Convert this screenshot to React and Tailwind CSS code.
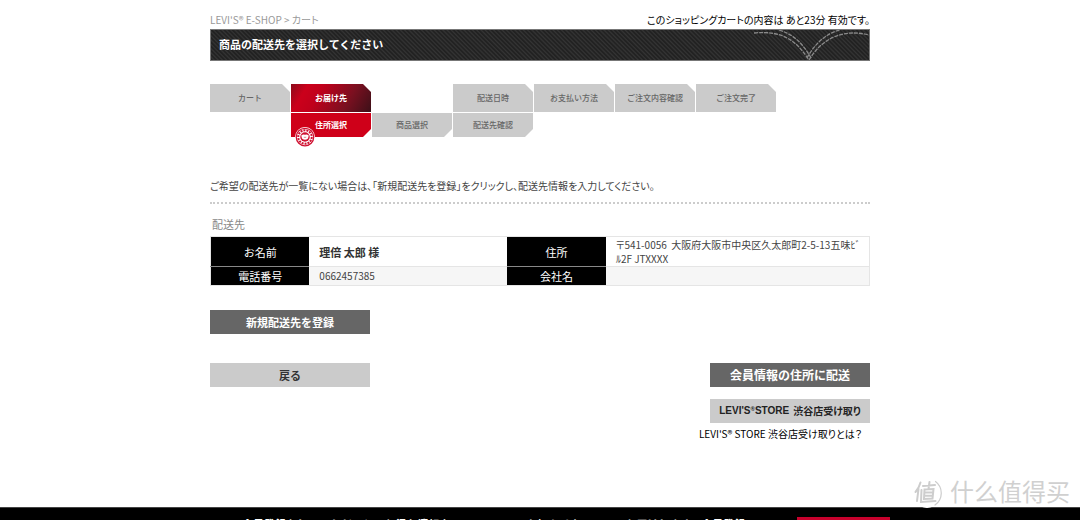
import React from 'react';

const steps = ['カート', 'お届け先', '', '配送日時', 'お支払い方法', 'ご注文内容確認', 'ご注文完了'];
const subSteps = ['', '住所選択', '商品選択', '配送先確認'];

const Step = ({ label, active }) => (
  <li
    aria-current={active ? 'step' : undefined}
    className={`flex h-7 items-center justify-center [clip-path:polygon(0_0,72px_0,100%_8px,100%_100%,0_100%)] ${
      active
        ? 'bg-[linear-gradient(120deg,#8c0a1a_0%,#cb001b_18%,#c0001b_35%,#7a1020_70%,#3c1018_100%)] font-bold text-white'
        : 'bg-[#cbcbcb] font-medium text-[#666]'
    }`}
  >
    {label}
  </li>
);

const SubStep = ({ label, active }) => (
  <li aria-current={active ? 'step' : undefined} className="relative">
    <div
      className={`flex h-6 items-center justify-center [clip-path:polygon(0_0,100%_0,100%_16px,72px_100%,0_100%)] ${
        active ? 'bg-[#cf0019] font-bold text-white' : 'bg-[#cbcbcb] font-medium text-[#666]'
      }`}
    >
      {label}
    </div>
    {active && <Seal />}
  </li>
);

const Seal = () => (
  <svg viewBox="0 0 40 40" className="absolute top-3.5 left-1 h-5 w-5" aria-hidden="true">
    <circle cx="20" cy="20" r="20" fill="#fff" />
    <circle cx="20" cy="20" r="17.5" fill="none" stroke="#cf1030" strokeWidth="2.5" />
    <circle cx="20" cy="20" r="13.5" fill="none" stroke="#cf1030" strokeWidth="4" strokeDasharray="4 2" />
    <circle cx="20" cy="20" r="9.5" fill="#cf1030" />
    <path d="M12.5 17 Q16.5 13.5 20 15.5 Q23.5 13.5 27.5 17 L26 23 Q20 28 14 23 Z" fill="#fff" />
    <path d="M17 19.5 H23 L22 22 H18 Z" fill="#e6a0aa" />
  </svg>
);

const Arcuate = () => (
  <svg viewBox="0 0 120 30" className="h-[30px] w-[120px]" fill="none" stroke="#8a8a8a" strokeWidth="1.3" strokeDasharray="4 1" aria-hidden="true">
    <path d="M5 3 C35 0 48 12 60 30" />
    <path d="M30 0 C46 5 54 14 62 28" />
    <path d="M60 30 C72 10 92 -2 120 5" />
    <path d="M58 28 C66 13 78 3 91 0" />
  </svg>
);

const Watermark = () => (
  <div className="absolute right-2.5 bottom-2.5 flex items-center gap-2 font-['Noto_Sans_CJK_SC',sans-serif] text-[#d0d0d0]">
    <svg viewBox="0 0 30 30" className="h-[30px] w-[30px]" aria-hidden="true">
      <circle cx="15" cy="15" r="15" fill="#fff" />
      <g fill="none" stroke="#cdcdcd" strokeLinecap="round">
        <path d="M23.500 3.500 A14.500 14.500 0 0 1 23 27" strokeWidth="1.200" />
        <g strokeWidth="2">
          <path d="M8.500 4.500 Q7 10 3.500 14 M6.500 11 L5 23" />
          <path d="M11 8 L23 7 M17.500 4 L16.500 11 M12.500 11.500 L21.500 11 L20.500 20.500 L12 21 Z M12.500 14.500 H21 M12.300 17.700 H20.500 M9.500 12 L9 24 L23.500 23" />
        </g>
      </g>
    </svg>
    <span className="pb-1 text-2xl leading-[30px]">什么值得买</span>
  </div>
);

const th = 'w-[15%] border-b bg-black text-[11px] leading-[18px] font-normal text-white';
const td = 'border-b border-[#e5e5e5] pl-2.5';
const actionButton = 'flex h-6 w-40 items-center justify-center';

export default function App() {
  return (
    <div className="relative flex h-screen flex-col overflow-hidden bg-white font-['Noto_Sans_CJK_JP',sans-serif] text-[10px] leading-4 text-[#444]">
      <div className="mx-auto w-full max-w-[660px] grow pt-3">
        <header>
          <div className="flex justify-between [font-feature-settings:'palt']">
            <nav className="text-[#999]" aria-label="breadcrumb">
              <a href="#top">LEVI'S® E-SHOP</a> &gt; カート
            </nav>
            <p className="text-black">このショッピングカートの内容は あと23分 有効です。</p>
          </div>
          <div className="mt-px flex h-8 items-center justify-between border border-[#777] bg-[repeating-linear-gradient(45deg,#222_0px,#222_1px,#343434_2px,#282828_3px)] pl-2">
            <h1 className="pb-0.5 text-[11px] font-bold text-white">商品の配送先を選択してください</h1>
            <Arcuate />
          </div>
        </header>

        <ol className="mt-[23px] grid grid-cols-[repeat(7,80px)] gap-px text-[8px]">
          {steps.map((label, i) => (label ? <Step key={i} label={label} active={i === 1} /> : <li key={i} />))}
        </ol>
        <ol className="mt-px grid grid-cols-[repeat(7,80px)] gap-px text-[8px]">
          {subSteps.map((label, i) => (label ? <SubStep key={i} label={label} active={i === 1} /> : <li key={i} />))}
        </ol>

        <p className="mt-[41px] [font-feature-settings:'palt']">
          ご希望の配送先が一覧にない場合は、「新規配送先を登録」をクリックし、配送先情報を入力してください。
        </p>
        <hr className="mt-2 border-t-2 border-dotted border-[#ccc]" />

        <h2 className="mt-3 pl-0.5 text-[11px] text-[#888]">配送先</h2>
        <table className="mt-1 w-full table-fixed border-collapse border border-[#e5e5e5]">
          <tbody>
            <tr className="h-[30px]">
              <th scope="row" className={`${th} border-[#888]`}>お名前</th>
              <td className={`${td} w-[30%] text-[11px] font-bold text-[#333]`}>理倍 太郎 様</td>
              <th scope="row" className={`${th} border-[#888]`}>住所</th>
              <td className={`${td} [font-feature-settings:'palt']`}>
                <div className="leading-[14px]">〒541-0056&nbsp; 大阪府大阪市中央区久太郎町2-5-13五味ﾋﾞ</div>
                <div className="leading-[14px]">ﾙ2F JTXXXX</div>
              </td>
            </tr>
            <tr className="bg-[#f6f6f6]">
              <th scope="row" className={`${th} border-[#e5e5e5]`}>電話番号</th>
              <td className={td}>0662457385</td>
              <th scope="row" className={`${th} border-[#e5e5e5]`}>会社名</th>
              <td className={td} />
            </tr>
          </tbody>
        </table>

        <button type="button" className={`${actionButton} mt-6 bg-[#666] text-[11px] font-bold text-white`}>
          新規配送先を登録
        </button>

        <div className="mt-[29px] flex items-start justify-between">
          <button type="button" className={`${actionButton} bg-[#cbcbcb] text-[11px] font-bold text-[#333]`}>戻る</button>
          <div className="flex flex-col items-end">
            <button type="button" className={`${actionButton} bg-[#666] text-xs font-bold text-white`}>
              会員情報の住所に配送
            </button>
            <button type="button" className={`${actionButton} mt-3 gap-1 bg-[#cbcbcb] font-bold text-[#222]`}>
              <span className="font-['Liberation_Sans',sans-serif]">
                LEVI'S<sup className="text-[6px]">®</sup>STORE
              </span>
              <span className="[font-feature-settings:'palt']">渋谷店受け取り</span>
            </button>
            <a href="#store" className="mt-[3px] pr-2 text-black [font-feature-settings:'palt']">
              LEVI'S® STORE 渋谷店受け取りとは？
            </a>
          </div>
        </div>
      </div>

      <footer className="h-[13px] shrink-0 border-t border-[#444] bg-black">
        <div className="mx-auto flex w-full max-w-[660px] items-start justify-between pt-[9px] pl-8">
          <p className="text-[11px] leading-[14px] font-bold whitespace-nowrap text-white">
            会員登録をしていただくと、お得な情報やキャンペーンのお知らせをメールでお届けします。会員登録
          </p>
          <a href="#register" className="-mr-5 block h-6 w-[93px] shrink-0 bg-[#c8002c]" aria-label="会員登録" />
        </div>
      </footer>
      <Watermark />
    </div>
  );
}
